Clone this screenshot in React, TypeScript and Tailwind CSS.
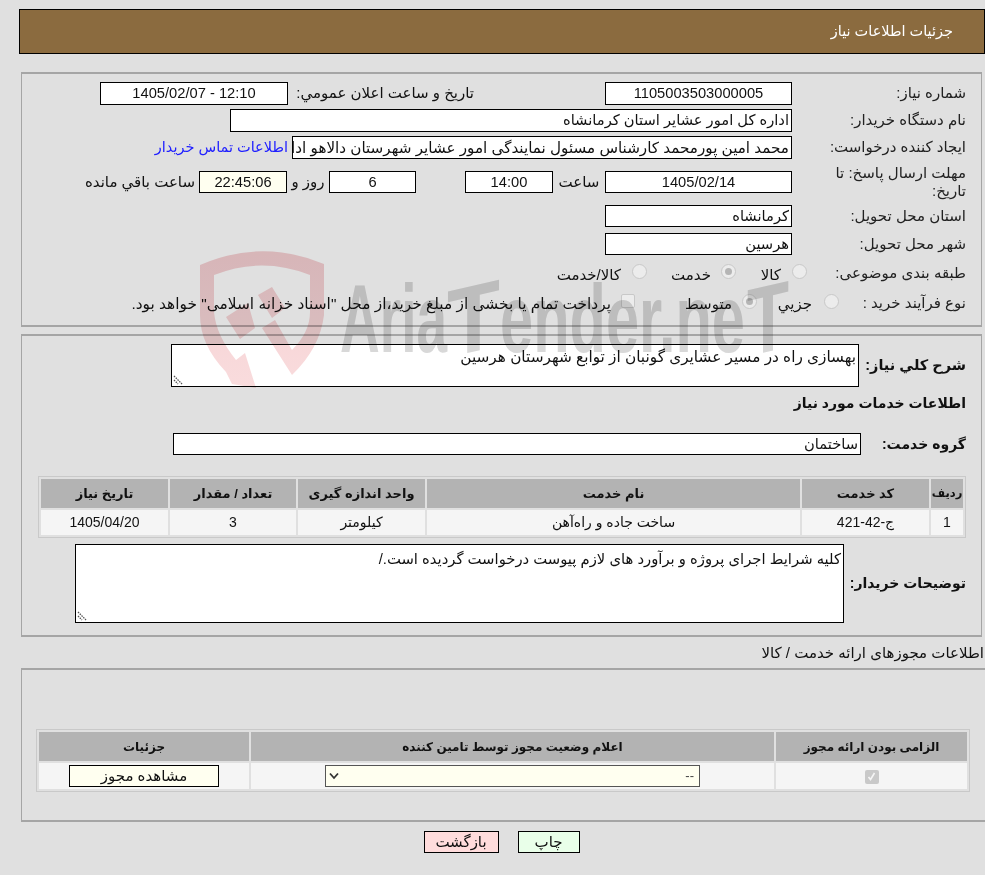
const FONT = "font-['Liberation_Sans','DejaVu_Sans',sans-serif]";

function Field({ className = "", children }: { className?: string; children?: React.ReactNode }) {
  return (
    <div className={"h-[23px] border border-black bg-white text-[14.7px] leading-[21px] px-[2px] overflow-hidden whitespace-nowrap " + className}>
      {children}
    </div>
  );
}

function Radio({ checked, className = "" }: { checked?: boolean; className?: string }) {
  return (
    <span className={"inline-flex shrink-0 w-[15px] h-[15px] rounded-full border border-[#c8c8c8] bg-[#ececec] items-center justify-center " + className}>
      {checked && <span className="w-[7px] h-[7px] rounded-full bg-[#b5b5b5]" />}
    </span>
  );
}

function Row({ label, className = "", children }: { label: React.ReactNode; className?: string; children: React.ReactNode }) {
  return (
    <div className={"flex items-center " + className}>
      <div className="w-[189px] pr-[15px] text-[15px] text-[#222] shrink-0">{label}</div>
      {children}
    </div>
  );
}

function Grip() {
  return (
    <svg className="absolute left-[1px] bottom-[1px]" width="10" height="10" viewBox="0 0 10 10" fill="none">
      <path d="M1 1 L9 9 M1 5 L5 9" stroke="#555" strokeWidth="1.3" strokeDasharray="1.5 1" />
    </svg>
  );
}

// Watermark laid over the page, blended so the text and boxes stay visible under it
function Watermark() {
  return (
    <div dir="ltr" className="absolute inset-0 mix-blend-multiply pointer-events-none">
      <svg width="985" height="875" viewBox="0 0 985 875" fill="none">
        <defs>
          <linearGradient id="shield" x1="0" y1="250" x2="0" y2="390" gradientUnits="userSpaceOnUse">
            <stop offset="0" stopColor="#f5cfd2" />
            <stop offset="1" stopColor="#f9dcdd" />
          </linearGradient>
        </defs>
        <path
          d="M200 265 Q262 238 324 264 V315 Q320 348 292 375 L262 328 L275 320 L292 350 Q310 332 310 312 V275 Q262 256 214 275 V312 Q216 335 236 360 L245 353 L256 388 L232 384 L226 372 Q200 345 200 315 Z"
          fill="url(#shield)"
        />
        <path d="M226 317 L248 303 L255 328 L240 339 Z M258 295 L272 287 L285 308 L272 318 Z" fill="url(#shield)" />
        <g fill="#d8d8d8" fontFamily="'Liberation Sans', sans-serif" fontWeight="700" fontSize="96">
          <text x="340" y="352" textLength="107" lengthAdjust="spacingAndGlyphs">Aria</text>
          <text x="447" y="352" textLength="53" lengthAdjust="spacingAndGlyphs" transform="translate(0 109) skewY(-13)">T</text>
          <text x="500" y="352" textLength="245" lengthAdjust="spacingAndGlyphs">ender.ne</text>
          <text x="747" y="352" textLength="42" lengthAdjust="spacingAndGlyphs" transform="translate(0 177) skewY(-13)">T</text>
        </g>
      </svg>
    </div>
  );
}

export default function App() {
  return (
    <div dir="rtl" className={"relative w-[985px] h-[875px] bg-[#e0e0e0] text-[#111] overflow-hidden " + FONT}>
      <div className="pt-[9px] pl-[19px]">
        {/* header */}
        <div className="h-[45px] border border-black bg-[#8b6b3f] text-white text-[14.5px] leading-[43px] pr-[31px]">
          جزئیات اطلاعات نیاز
        </div>
      </div>

      <div className="pt-[18px] pl-[21px] pr-[3px]">
        {/* main info */}
        <div className="h-[255px] border-y-2 border-x border-[#a5a5a5] pt-[8px]">
          <div className="flex flex-col gap-[4px]">
            <Row label="شماره نياز:">
              <Field className="w-[187px] text-center">1105003503000005</Field>
              <div className="w-[317px] pr-[131px] text-[15px] whitespace-nowrap">تاريخ و ساعت اعلان عمومي:</div>
              <Field className="w-[188px] text-center" >
                <span dir="ltr">1405/02/07 - 12:10</span>
              </Field>
            </Row>
            <Row label="نام دستگاه خريدار:">
              <Field className="w-[562px]">اداره کل امور عشایر استان کرمانشاه</Field>
            </Row>
            <Row label="ایجاد کننده درخواست:">
              <Field className="w-[500px] !text-[15.2px]">محمد امين پورمحمد کارشناس مسئول نمایندگی امور عشایر شهرستان دالاهو اداره</Field>
              <a className="text-[14.5px] text-[#2020ff] mr-[4px] whitespace-nowrap">اطلاعات تماس خريدار</a>
            </Row>
            <Row label={<span className="block leading-[18px]">مهلت ارسال پاسخ: تا<br />تاريخ:</span>} className="h-[38px]">
              <Field className="w-[187px] !h-[22px] text-center">1405/02/14</Field>
              <span className="w-[52px] text-center text-[15px]">ساعت</span>
              <Field className="w-[88px] !h-[22px] text-center">14:00</Field>
              <span className="w-[49px]" />
              <Field className="w-[87px] !h-[22px] text-center">6</Field>
              <span className="w-[42px] text-center text-[15px]">روز و</span>
              <Field className="w-[88px] !h-[22px] text-center !bg-[#fffff0]">22:45:06</Field>
              <span className="mr-[4px] text-[15px] whitespace-nowrap">ساعت باقي مانده</span>
            </Row>
            <Row label="استان محل تحويل:">
              <Field className="w-[187px] !h-[22px]">کرمانشاه</Field>
            </Row>
            <Row label="شهر محل تحويل:" className="mt-[1px]">
              <Field className="w-[187px] !h-[22px]">هرسین</Field>
            </Row>
            <Row label="طبقه بندی موضوعی:" className="mt-[3px] h-[22px]">
              <div className="flex items-center text-[15px] whitespace-nowrap">
                <Radio className="mr-[-15px] mb-[4px]" />
                <span className="mr-[11px] w-[45px] mt-[5px]">کالا</span>
                <Radio checked className="mb-[4px]" />
                <span className="mr-[10px] w-[64px] mt-[5px]">خدمت</span>
                <Radio className="mb-[4px]" />
                <span className="mr-[11px] mt-[5px]">کالا/خدمت</span>
              </div>
            </Row>
            <Row label="نوع فرآيند خريد :" className="mt-[3px] h-[24px]">
              <div className="flex items-center text-[15px] whitespace-nowrap">
                <Radio className="mr-[-47px] mb-[4px]" />
                <span className="mr-[12px] w-[55px] mt-[2px]">جزيي</span>
                <Radio checked className="mb-[4px]" />
                <span className="mr-[10px] w-[97px] mt-[2px]">متوسط</span>
                <span className="shrink-0 w-[14px] h-[14px] border border-[#c8c8c8] bg-[#ececec] rounded-[2px] mb-[4px]" />
                <span className="mr-[10px] text-[15.4px] mt-[2px]">پرداخت تمام یا بخشی از مبلغ خرید،از محل "اسناد خزانه اسلامی" خواهد بود.</span>
              </div>
            </Row>
          </div>
        </div>

        {/* description + services */}
        <div className="mt-[7px] h-[303px] border-y-2 border-x border-[#a5a5a5] pr-[15px] pt-[8px]">
          <div className="flex items-center">
            <div className="w-[107px] shrink-0 text-[14.5px] font-bold whitespace-nowrap">شرح کلي نياز:</div>
            <div className="relative w-[688px] h-[43px] border border-black bg-white text-[15.3px] leading-[20px] px-[2px] pt-[2px]">
              بهسازی راه در مسیر عشایری گونبان از توابع شهرستان هرسین
              <Grip />
            </div>
          </div>
          <div className="text-[14px] font-bold mt-[4px] h-[24px] leading-[24px]">اطلاعات خدمات مورد نياز</div>
          <div className="flex items-center mt-[18px]">
            <div className="w-[105px] shrink-0 text-[14px] font-bold whitespace-nowrap">گروه خدمت:</div>
            <Field className="w-[688px] !h-[22px] !leading-[20px]">ساختمان</Field>
          </div>
          <table className="mt-[21px] w-[928px] table-fixed border border-[#c9c9c9] text-[14px] border-separate border-spacing-[2px]">
            <thead>
              <tr className="h-[29px] bg-[#b3b3b3] text-[13px] font-bold">
                <th className="w-[32px] text-[11.5px]">رديف</th>
                <th className="w-[127px]">کد خدمت</th>
                <th className="w-[373px]">نام خدمت</th>
                <th className="w-[127px]">واحد اندازه گيری</th>
                <th className="w-[126px]">تعداد / مقدار</th>
                <th>تاريخ نياز</th>
              </tr>
            </thead>
            <tbody>
              <tr className="h-[25px] bg-[#f5f5f5] text-center">
                <td>1</td>
                <td>ج-42-421</td>
                <td>ساخت جاده و راه‌آهن</td>
                <td>کیلومتر</td>
                <td>3</td>
                <td>1405/04/20</td>
              </tr>
            </tbody>
          </table>
          <div className="flex items-center mt-[6px]">
            <div className="w-[122px] shrink-0 text-[14px] font-bold whitespace-nowrap">توضيحات خريدار:</div>
            <div className="relative w-[769px] h-[79px] border border-black bg-white text-[14.8px] leading-[20px] px-[2px] pt-[4px]">
              کلیه شرایط اجرای پروژه و برآورد های لازم پیوست درخواست گردیده است./
              <Grip />
            </div>
          </div>
        </div>

        <div className="mt-[5px] text-[15px] leading-[22px] mr-[-2px] whitespace-nowrap">اطلاعات مجوزهای ارائه خدمت / کالا</div>

        {/* licences */}
        <div className="mt-[4px] mr-[-3px] h-[154px] border-y-2 border-l border-[#a5a5a5] pt-[59px] pr-[15px]">
          <table className="w-[934px] table-fixed border border-[#c9c9c9] text-[12px] border-separate border-spacing-[2px]">
            <thead>
              <tr className="h-[29px] bg-[#b3b3b3] font-bold">
                <th className="w-[191px]">الزامی بودن ارائه مجوز</th>
                <th className="w-[523px]">اعلام وضعیت مجوز توسط تامین کننده</th>
                <th>جزئيات</th>
              </tr>
            </thead>
            <tbody>
              <tr className="h-[26px] bg-[#f5f5f5] text-center">
                <td>
                  <span className="inline-flex w-[14px] h-[14px] rounded-[2px] bg-[#c9c9c9] items-center justify-center align-middle">
                    <svg width="11" height="11" viewBox="0 0 11 11" fill="none"><path d="M2.5 6 L4.5 8.5 L8.5 2" stroke="#f5f5f5" strokeWidth="1.6" /></svg>
                  </span>
                </td>
                <td>
                  <div className="mr-[74px] w-[375px] h-[22px] border border-[#555] bg-[#fffff0] flex items-center justify-between px-[3px] text-[13px] text-[#444]">
                    <span className="pr-[2px]">--</span>
                    <svg width="10" height="8" viewBox="0 0 10 8" fill="none"><path d="M1 1.5 L5 6 L9 1.5" stroke="#333" strokeWidth="1.8" /></svg>
                  </div>
                </td>
                <td>
                  <div className="mx-auto w-[150px] h-[22px] border border-black bg-[#fffff0] text-[15px] leading-[20px]">مشاهده مجوز</div>
                </td>
              </tr>
            </tbody>
          </table>
        </div>

        {/* buttons */}
        <div className="mt-[9px] flex justify-center gap-[19px]">
          <button className="w-[62px] h-[22px] border border-black bg-[#e9ffe9] text-[15px] leading-[18px]">چاپ</button>
          <button className="w-[75px] h-[22px] border border-black bg-[#ffdcdc] text-[15px] leading-[18px]">بازگشت</button>
        </div>
      </div>

      <Watermark />
    </div>
  );
}
